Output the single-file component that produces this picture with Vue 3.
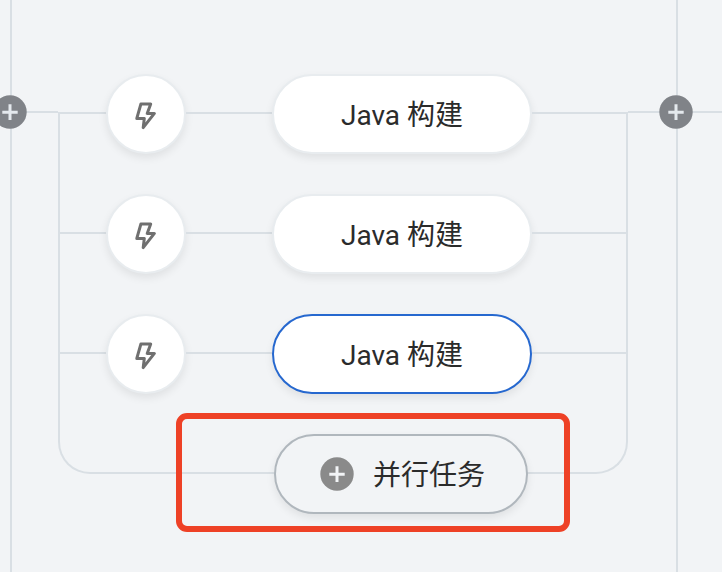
<script setup>
const tasks = [
  { id: 1, name: 'Java 构建', active: false },
  { id: 2, name: 'Java 构建', active: false },
  { id: 3, name: 'Java 构建', active: true },
]
</script>

<template>
  <main class="pipeline">
    <div class="rail rail-start">
      <span class="divider"></span>
      <span class="link"></span>
      <button class="add-stage" type="button" aria-label="+">
        <svg class="plus" viewBox="0 0 34 34" aria-hidden="true">
          <circle cx="17" cy="17" r="16.7" />
          <path d="M9.3 17.2H24.7M17 9.3V25" />
        </svg>
      </button>
    </div>

    <section class="group">
      <div v-for="task in tasks" :key="task.id" class="task-row">
        <span class="wire wire-in"></span>
        <button class="trigger" type="button" aria-label="⚡">
          <svg class="bolt" viewBox="0 0 24 32" aria-hidden="true">
            <path d="M6.9 6H16.7L13.2 15.4H20.4L9.2 29.6L10.3 20.4H2.8Z" />
          </svg>
        </button>
        <span class="wire wire-mid"></span>
        <button class="task" :class="{ active: task.active }" type="button">
          <span class="task-name">{{ task.name }}</span>
        </button>
        <span class="wire wire-out"></span>
      </div>

      <div class="highlight">
        <button class="task add-task" type="button">
          <svg class="plus" viewBox="0 0 34 34" aria-hidden="true">
            <circle cx="17" cy="17" r="16.7" />
            <path d="M9.3 17.2H24.7M17 9.3V25" />
          </svg>
          <span class="task-name">并行任务</span>
        </button>
      </div>
    </section>

    <div class="rail rail-end">
      <span class="divider"></span>
      <span class="link"></span>
      <button class="add-stage" type="button" aria-label="+">
        <svg class="plus" viewBox="0 0 34 34" aria-hidden="true">
          <circle cx="17" cy="17" r="16.7" />
          <path d="M9.3 17.2H24.7M17 9.3V25" />
        </svg>
      </button>
    </div>
  </main>
</template>

<style>
body {
  margin: 0;
  background: #f2f4f6;
}
</style>

<style scoped>
.pipeline {
  --line: #d9dfe4;
  display: flex;
  min-height: 100vh;
  overflow: hidden;
  background: #f2f4f6;
  color: #2b2b2b;
  font-family: Roboto, "Noto Sans CJK SC", sans-serif;
  font-size: 28px;
  line-height: 40px;
}

button {
  box-sizing: border-box;
  padding: 0;
  border: 0;
  background: none;
  color: inherit;
  font: inherit;
  cursor: pointer;
}

/* Stage boundaries on either side of the group */
.rail {
  display: grid;
  flex: none;
  align-items: start;
}

.rail > * {
  grid-area: 1 / 1;
}

.rail-start {
  width: 58px;
}

.rail-end {
  width: 94px;
}

.divider {
  width: 2px;
  height: 100%;
  margin-left: 10px;
  background: var(--line);
}

.rail-end .divider {
  margin-left: 48px;
}

.link {
  height: 2px;
  margin-top: 111px;
  background: var(--line);
}

.rail-start .link {
  margin-left: 12px;
}

.add-stage {
  width: 34px;
  height: 34px;
  margin-top: 95px;
  margin-left: -7px;
}

.rail-end .add-stage {
  margin-left: 31px;
}

.plus {
  display: block;
  flex: none;
  width: 34px;
  height: 34px;
}

.plus circle {
  fill: #808388;
}

.plus path {
  fill: none;
  stroke: #e4e9ed;
  stroke-width: 3;
}

/* Bracket that joins the parallel tasks */
.group {
  display: flex;
  flex: 1;
  flex-direction: column;
  gap: 40px;
  align-self: flex-start;
  margin-top: 112px;
  border: 2px solid var(--line);
  border-top: 0;
  border-radius: 0 0 32px 32px;
}

.task-row {
  display: flex;
  align-items: flex-start;
}

.task-row:first-child {
  margin-top: -38px;
}

.wire {
  height: 2px;
  margin-top: 38px;
  background: var(--line);
}

.wire-in {
  flex: 46 0 0;
}

.wire-mid {
  flex: 86 0 0;
}

.wire-out {
  flex: 94 0 0;
}

.trigger,
.task {
  display: flex;
  align-items: center;
  justify-content: center;
  height: 80px;
  border: 2px solid #e8ecef;
  border-radius: 40px;
  background: #fff;
  box-shadow: 0 4px 8px rgba(0, 0, 0, 0.08);
}

.trigger {
  width: 80px;
}

.bolt {
  width: 24px;
  height: 32px;
}

.bolt path {
  fill: none;
  stroke: #707070;
  stroke-width: 3;
  stroke-linejoin: round;
}

.task {
  width: 260px;
}

.task-name {
  padding-top: 3px;
  white-space: nowrap;
}

.task.active {
  border-color: #2668cf;
}

.highlight {
  margin: -21px 56px -60px 116px;
  padding: 15px 36px 12px 92px;
  border: 6px solid #ee4126;
  border-radius: 11px;
}

.add-task {
  gap: 19px;
  justify-content: flex-start;
  width: 100%;
  padding-left: 44px;
  border-color: #b0b7bd;
  background: #f2f4f6;
}

.add-task .plus circle {
  fill: #8a8a8a;
}

.add-task .plus path {
  stroke: #f2f4f6;
}
</style>
